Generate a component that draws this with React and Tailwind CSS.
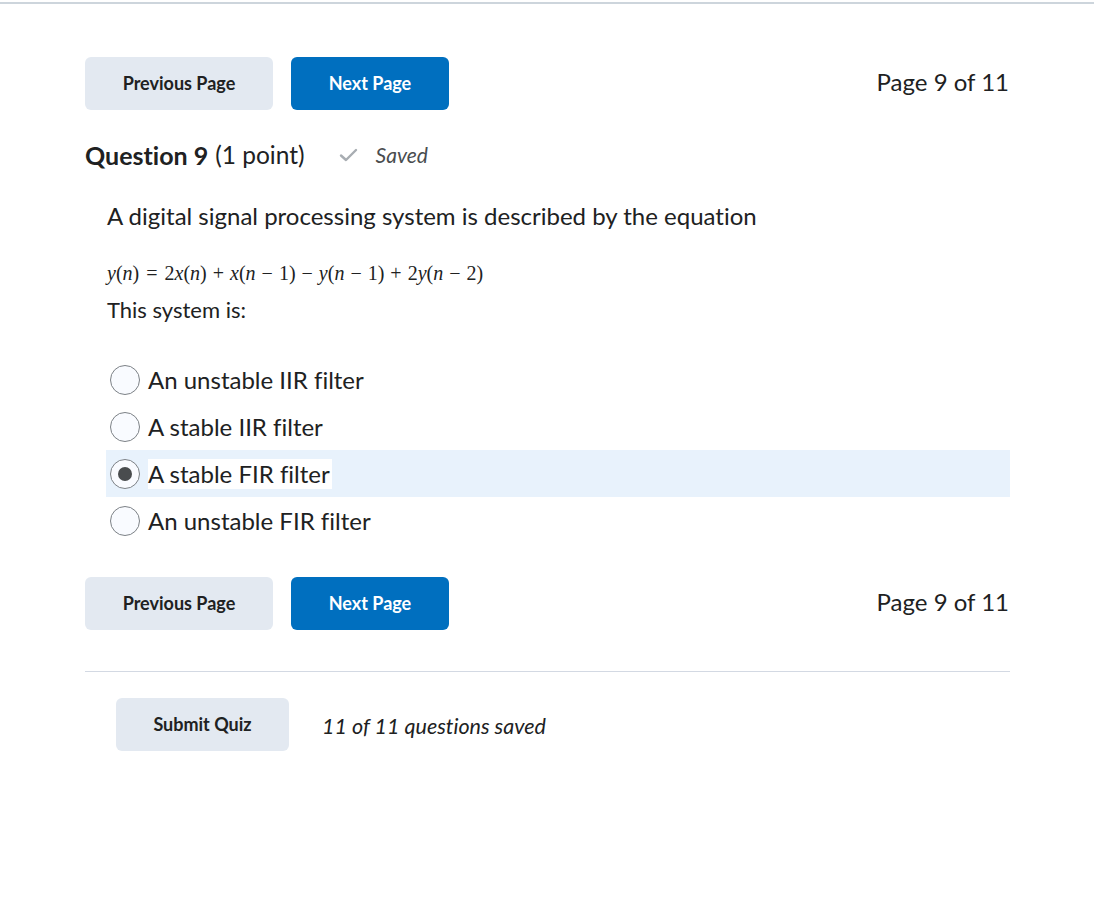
import React, { useState } from 'react';

const font = { fontFamily: 'Lato, "Open Sans", sans-serif', fontVariantLigatures: 'none' };

const options = [
  'An unstable IIR filter',
  'A stable IIR filter',
  'A stable FIR filter',
  'An unstable FIR filter',
];

const PagerRow = () => (
  <div className="flex items-center justify-between">
    <div className="flex items-center gap-[18px]">
      <button className="h-[53px] w-[188px] rounded-md bg-[#e3e9f1] text-[18px] font-bold text-[#202122]">
        Previous Page
      </button>
      <button className="h-[53px] w-[158px] rounded-md bg-[#006fbf] text-[18px] font-bold text-white">
        Next Page
      </button>
    </div>
    <div className="text-[24px] leading-[30px] text-[#202122] -mt-[4px] mr-[1px]">Page 9 of 11</div>
  </div>
);

const Radio = ({ checked }) => (
  <span className="flex h-[30px] w-[30px] shrink-0 items-center justify-center rounded-full border border-[#7c8186] bg-[#f9fbff]">
    {checked && <span className="h-[14px] w-[14px] rounded-full bg-[#494c4e]" />}
  </span>
);

// binary op / relation with math spacing
const Op = ({ children }) => <span className="mx-[6px]">{children}</span>;
const Rel = ({ children }) => <span className="mx-[7px]">{children}</span>;

const Eq = () => (
  <div className="text-[20px] leading-[24px] text-[#202122]" style={{ fontFamily: '"Liberation Serif", "DejaVu Serif", serif' }}>
    <i>y</i>(<i>n</i>)<Rel>=</Rel>2<i>x</i>(<i>n</i>)<Op>+</Op><i>x</i>(<i>n</i><Op>−</Op>1)<Op>−</Op><i>y</i>(<i>n</i><Op>−</Op>1)<Op>+</Op>2<i>y</i>(<i>n</i><Op>−</Op>2)
  </div>
);

export default function App() {
  const [selected, setSelected] = useState(2);

  return (
    <div className="min-h-[917px] bg-white" style={font}>
      <div className="h-[2px] bg-[#cdd5dc] mt-[2px]" />
      <div className="mx-[85px] w-[925px] pt-[53px]">
        <PagerRow />

        <div className="mt-[30px] flex items-center leading-[30px] text-[#202122]">
          <span className="text-[25px] font-bold">Question 9</span>
          <span className="ml-[7px] text-[24.5px]">(1 point)</span>
          <svg className="ml-[34px]" width="19" height="14" viewBox="0 0 19 14" fill="none">
            <path d="M2 7.5 L7 12 L17 2" stroke="#a8adb2" strokeWidth="2.4" strokeLinecap="round" strokeLinejoin="round" />
          </svg>
          <span className="ml-[18px] text-[21px] italic text-[#494c4e]">Saved</span>
        </div>

        <div className="pl-[22px]">
          <p className="mt-[31px] text-[24px] leading-[30px] text-[#202122]">A digital signal processing system is described by the equation</p>
          <div className="mt-[30px]"><Eq /></div>
          <p className="mt-[11px] text-[22px] leading-[28px] text-[#202122]">This system is:</p>
        </div>

        <div className="mt-[32px] flex flex-col">
          {options.map((o, i) => (
            <label
              key={o}
              onClick={() => setSelected(i)}
              className={`ml-[21px] flex h-[47px] cursor-pointer items-center gap-[8px] pl-[4px] ${selected === i ? 'bg-[#e8f2fc]' : ''}`}
            >
              <Radio checked={selected === i} />
              <span className={`text-[24px] leading-[30px] text-[#202122] ${selected === i ? 'bg-white pr-[2px]' : ''}`}>{o}</span>
            </label>
          ))}
        </div>

        <div className="mt-[33px]">
          <PagerRow />
        </div>

        <div className="mt-[41px] h-[1px] bg-[#d3d9e3]" />

        <div className="mt-[26px] flex items-center pl-[31px]">
          <button className="h-[53px] w-[173px] rounded-md bg-[#e3e9f1] text-[18px] font-bold text-[#202122]">
            Submit Quiz
          </button>
          <span className="ml-[33px] mt-[4px] text-[21.5px] italic text-[#202122]">11 of 11 questions saved</span>
        </div>
      </div>
    </div>
  );
}
